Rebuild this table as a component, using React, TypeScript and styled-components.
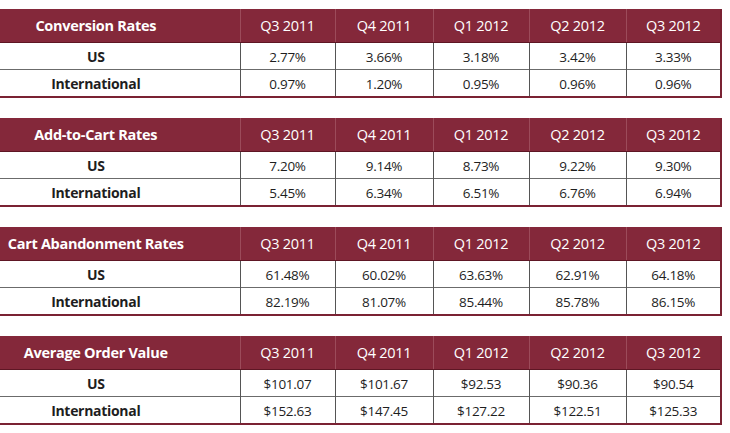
import styled, { createGlobalStyle } from "styled-components"

const GlobalStyle = createGlobalStyle`
  html, body {
    margin: 0;
    padding: 0;
    background: #ffffff;
  }
  body {
    font-family: "Open Sans", Lato, sans-serif;
  }
`

const Page = styled.div`
  width: 730px;
  padding-top: 9px;
  display: flex;
  flex-direction: column;
  gap: 20px;
`

const Table = styled.table`
  width: 721px;
  border-collapse: collapse;
  table-layout: fixed;
  border-bottom: 2px solid #7a2233;
  border-right: 2px solid #7a2233;
`

const HeadCell = styled.th<{ $label?: boolean }>`
  height: 32px;
  padding: 1px 0 0 0;
  padding-right: ${(props) => (props.$label ? "48px" : "0")};
  line-height: 16px;
  background: #84283a;
  color: #ffffff;
  font-size: 14.5px;
  font-weight: ${(props) => (props.$label ? 700 : 400)};
  letter-spacing: -0.3px;
  text-align: center;
  white-space: nowrap;
  border-bottom: 1px solid #5e1624;
  border-left: ${(props) => (props.$label ? "none" : "1px solid #9c4b5a")};
`

const Cell = styled.td<{ $label?: boolean }>`
  height: 25px;
  padding: 1px 0 0 0;
  padding-right: ${(props) => (props.$label ? "48px" : "0")};
  line-height: 16px;
  font-size: ${(props) => (props.$label ? "14px" : "13.5px")};
  font-weight: ${(props) => (props.$label ? 700 : 400)};
  letter-spacing: -0.3px;
  color: #1e1e1e;
  text-align: center;
  border-left: ${(props) => (props.$label ? "none" : "1px solid #555555")};
  border-top: 1px solid #6b6b6b;
`

const quarters = ["Q3 2011", "Q4 2011", "Q1 2012", "Q2 2012", "Q3 2012"]

type Rates = { title: string; us: string[]; intl: string[] }

const tables: Rates[] = [
  {
    title: "Conversion Rates",
    us: ["2.77%", "3.66%", "3.18%", "3.42%", "3.33%"],
    intl: ["0.97%", "1.20%", "0.95%", "0.96%", "0.96%"]
  },
  {
    title: "Add-to-Cart Rates",
    us: ["7.20%", "9.14%", "8.73%", "9.22%", "9.30%"],
    intl: ["5.45%", "6.34%", "6.51%", "6.76%", "6.94%"]
  },
  {
    title: "Cart Abandonment Rates",
    us: ["61.48%", "60.02%", "63.63%", "62.91%", "64.18%"],
    intl: ["82.19%", "81.07%", "85.44%", "85.78%", "86.15%"]
  },
  {
    title: "Average Order Value",
    us: ["$101.07", "$101.67", "$92.53", "$90.36", "$90.54"],
    intl: ["$152.63", "$147.45", "$127.22", "$122.51", "$125.33"]
  }
]

const widths = [240, 95, 98, 96, 97, 95]

const RateTable = ({ title, us, intl }: Rates) => (
  <Table>
    <colgroup>
      {widths.map((w, i) => (
        <col key={i} style={{ width: w }} />
      ))}
    </colgroup>
    <thead>
      <tr>
        <HeadCell $label>{title}</HeadCell>
        {quarters.map((q) => (
          <HeadCell key={q}>{q}</HeadCell>
        ))}
      </tr>
    </thead>
    <tbody>
      <tr>
        <Cell $label>US</Cell>
        {us.map((v, i) => (
          <Cell key={i}>{v}</Cell>
        ))}
      </tr>
      <tr>
        <Cell $label>International</Cell>
        {intl.map((v, i) => (
          <Cell key={i}>{v}</Cell>
        ))}
      </tr>
    </tbody>
  </Table>
)

const App = () => (
  <>
    <GlobalStyle />
    <Page>
      {tables.map((t) => (
        <RateTable key={t.title} {...t} />
      ))}
    </Page>
  </>
)

export default App
